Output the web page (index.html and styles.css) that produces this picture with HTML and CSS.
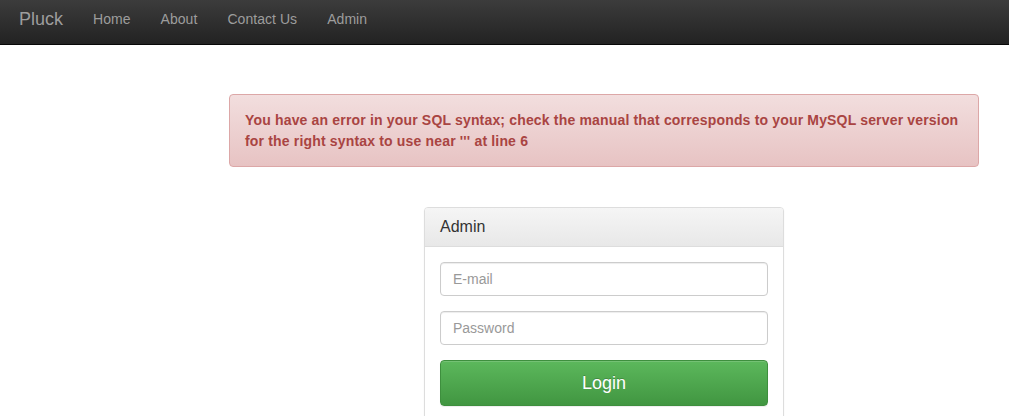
FILE: index.html
```html
<!DOCTYPE html>
<html>
<head>
<meta charset="utf-8">
<link rel="stylesheet" href="styles.css">
</head>
<body>
<nav class="navbar">
  <a class="brand" href="#">Pluck</a>
  <ul class="nav">
    <li><a href="#">Home</a></li>
    <li><a href="#">About</a></li>
    <li><a href="#">Contact Us</a></li>
    <li><a href="#">Admin</a></li>
  </ul>
</nav>
<main class="content">
  <div class="column">
    <div class="alert">You have an error in your SQL syntax; check the manual that corresponds to your MySQL server version for the right syntax to use near ''' at line 6</div>
    <div class="panel">
      <div class="panel-heading">Admin</div>
      <div class="panel-body">
        <input class="field" type="text" placeholder="E-mail">
        <input class="field" type="password" placeholder="Password">
        <button class="btn-login">Login</button>
      </div>
    </div>
  </div>
</main>
</body>
</html>
```
FILE: styles.css
```css
* { box-sizing: border-box; }
html, body { margin: 0; padding: 0; }
body {
  font-family: "Liberation Sans", Arial, sans-serif;
  font-size: 14px;
  line-height: 20px;
  color: #333;
  background: #fff;
}
.navbar {
  display: flex;
  align-items: stretch;
  height: 45px;
  padding-left: 4px;
  background: linear-gradient(to bottom, #3c3c3c 0, #222 100%);
  border-bottom: 1px solid #080808;
}
.brand {
  display: flex;
  align-items: center;
  padding: 0 15px 6px;
  font-size: 18px;
  color: #9d9d9d;
  text-decoration: none;
}
.nav {
  display: flex;
  list-style: none;
  margin: 0;
  padding: 0;
}
.nav a {
  display: flex;
  height: 100%;
  align-items: center;
  padding: 0 15px 6px;
  color: #9d9d9d;
  text-decoration: none;
  letter-spacing: 0.05px;
}
.content {
  display: flex;
  padding: 49px 15px 0 214px;
}
.column {
  width: 780px;
  padding: 0 15px;
}
.alert {
  padding: 15px 15px 14px;
  border: 1px solid #dca7a7;
  border-radius: 4px;
  background: linear-gradient(to bottom, #f2dede 0, #e7c3c3 100%);
  color: #a94442;
  font-weight: bold;
  line-height: 21px;
  letter-spacing: 0.17px;
  margin-bottom: 40px;
}
.panel {
  width: 360px;
  margin: 0 auto;
  border: 1px solid #ddd;
  border-radius: 4px;
  background: #fff;
  box-shadow: 0 1px 2px rgba(0,0,0,.05);
}
.panel-heading {
  padding: 10px 15px;
  font-size: 16px;
  line-height: 18px;
  color: #333;
  border-bottom: 1px solid #ddd;
  border-radius: 3px 3px 0 0;
  background: linear-gradient(to bottom, #f5f5f5 0, #e8e8e8 100%);
}
.panel-body {
  display: flex;
  flex-direction: column;
  padding: 15px;
}
.field {
  height: 34px;
  margin-bottom: 15px;
  padding: 6px 12px;
  font-family: inherit;
  font-size: 14px;
  color: #555;
  border: 1px solid #ccc;
  border-radius: 4px;
  box-shadow: inset 0 1px 1px rgba(0,0,0,.075);
  outline: none;
}
.field::placeholder { color: #999; }
.btn-login {
  height: 46px;
  font-family: inherit;
  font-size: 18px;
  color: #fff;
  border: 1px solid #3e8f3e;
  border-radius: 4px;
  background: linear-gradient(to bottom, #5cb85c 0, #419641 100%);
  text-shadow: 0 -1px 0 rgba(0,0,0,.2);
  box-shadow: inset 0 1px 0 rgba(255,255,255,.15), 0 1px 1px rgba(0,0,0,.075);
}
```
